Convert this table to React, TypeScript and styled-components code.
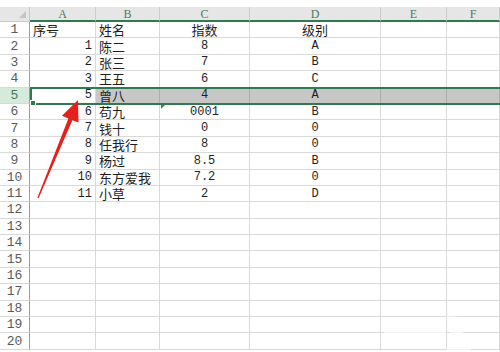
import React from "react";
import styled, { createGlobalStyle } from "styled-components";

const GlobalStyle = createGlobalStyle`
  html, body {
    margin: 0;
    padding: 0;
    background: #fff;
    overflow: hidden;
  }
`;

const COLS = "30px 66px 64px 90px 131px 66px 1fr";
const GREEN = "#2f7a4f";
const GRID = "#d9d9d9";

const Sheet = styled.div`
  position: relative;
  width: 500px;
  height: 352px;
  padding-top: 7px;
  box-sizing: border-box;
  overflow: hidden;
  background: #fff;
`;

const Row = styled.div<{ $header?: boolean; $selected?: boolean }>`
  position: relative;
  display: grid;
  grid-template-columns: ${COLS};
  height: ${(p) => (p.$header ? "15px" : "16.4px")};

  ${(p) =>
    p.$selected &&
    `
    &::after {
      content: "";
      position: absolute;
      left: 30px;
      right: -4px;
      top: -1px;
      bottom: -1px;
      border: 2px solid ${GREEN};
      pointer-events: none;
      z-index: 2;
    }
  `}
`;

const Corner = styled.div`
  position: relative;
  box-sizing: border-box;
  background: #e6e6e6;
  border-right: 1px solid #c9c9c9;
  border-bottom: 1px solid #c9c9c9;

  &::after {
    content: "";
    position: absolute;
    right: 3px;
    bottom: 3px;
    width: 0;
    height: 0;
    border-left: 7px solid transparent;
    border-bottom: 7px solid #c4c4c4;
  }
`;

const ColHead = styled.div`
  box-sizing: border-box;
  display: flex;
  align-items: center;
  justify-content: center;
  background: #e6e6e6;
  border-right: 1px solid #cbcbcb;
  border-bottom: 2px solid ${GREEN};
  font-family: "Liberation Serif", serif;
  font-size: 12px;
  color: #4b7c5e;
  line-height: 1;
`;

const RowNum = styled.div<{ $active?: boolean }>`
  box-sizing: border-box;
  display: flex;
  align-items: center;
  justify-content: center;
  background: ${(p) => (p.$active ? "#d6eadc" : "#fff")};
  border-right: 1px solid #9c9c9c;
  border-bottom: 1px solid ${GRID};
  font-family: "Liberation Mono", monospace;
  font-size: 13px;
  color: ${(p) => (p.$active ? "#3f7b58" : "#5a5a5a")};
  line-height: 1;
`;

type Align = "left" | "right" | "center";

const Cell = styled.div<{
  $align?: Align;
  $cjk?: boolean;
  $shade?: boolean;
  $flag?: boolean;
}>`
  position: relative;
  box-sizing: border-box;
  display: flex;
  align-items: center;
  justify-content: ${(p) =>
    p.$align === "right" ? "flex-end" : p.$align === "center" ? "center" : "flex-start"};
  padding: 0 3px;
  white-space: nowrap;
  background: ${(p) => (p.$shade ? "#c7c7c7" : "transparent")};
  border-right: 1px solid ${(p) => (p.$shade ? "#adadad" : GRID)};
  border-bottom: 1px solid ${GRID};
  font-family: ${(p) =>
    p.$cjk
      ? '"Noto Sans CJK SC", sans-serif'
      : '"Liberation Mono", "Noto Sans CJK SC", monospace'};
  font-size: ${(p) => (p.$cjk ? "13px" : "12px")};
  color: #1e1e1e;
  line-height: 1;

  ${(p) =>
    p.$flag &&
    `
    &::before {
      content: "";
      position: absolute;
      left: 1px;
      top: 0;
      width: 0;
      height: 0;
      border-top: 5px solid #2f8a4f;
      border-right: 5px solid transparent;
    }
  `}
`;

const FillHandle = styled.span`
  position: absolute;
  left: 30px;
  bottom: -2px;
  width: 4px;
  height: 4px;
  background: ${GREEN};
  border: 1px solid #fff;
  z-index: 3;
`;

const Overlay = styled.svg`
  position: absolute;
  left: 0;
  top: 0;
  pointer-events: none;
  z-index: 5;
`;

type Value = { text: string; align: Align; cjk?: boolean };

const data: Value[][] = [
  [
    { text: "序号", align: "left", cjk: true },
    { text: "姓名", align: "left", cjk: true },
    { text: "指数", align: "center", cjk: true },
    { text: "级别", align: "center", cjk: true },
  ],
  ...[
    ["1", "陈二", "8", "A"],
    ["2", "张三", "7", "B"],
    ["3", "王五", "6", "C"],
    ["5", "曾八", "4", "A"],
    ["6", "苟九", "0001", "B"],
    ["7", "钱十", "0", "0"],
    ["8", "任我行", "8", "0"],
    ["9", "杨过", "8.5", "B"],
    ["10", "东方爱我", "7.2", "0"],
    ["11", "小草", "2", "D"],
  ].map(
    ([a, b, c, d]): Value[] => [
      { text: a, align: "right" },
      { text: b, align: "left", cjk: true },
      { text: c, align: "center" },
      { text: d, align: "center" },
    ]
  ),
];

const letters = ["A", "B", "C", "D", "E", "F"];
const SELECTED = 5;
const TOTAL_ROWS = 20;

const App: React.FC = () => {
  return (
    <>
      <GlobalStyle />
      <Sheet>
        <Row $header>
          <Corner />
          {letters.map((l) => (
            <ColHead key={l}>{l}</ColHead>
          ))}
        </Row>
        {Array.from({ length: TOTAL_ROWS }, (_, i) => {
          const n = i + 1;
          const values = data[i] || [];
          const selected = n === SELECTED;
          return (
            <Row key={n} $selected={selected}>
              <RowNum $active={selected}>{n}</RowNum>
              {letters.map((l, c) => {
                const v = values[c];
                return (
                  <Cell
                    key={l}
                    $align={v ? v.align : "left"}
                    $cjk={v?.cjk}
                    $shade={selected && c > 0}
                    $flag={n === 6 && c === 2}
                  >
                    {v ? v.text : ""}
                  </Cell>
                );
              })}
              {selected && <FillHandle />}
            </Row>
          );
        })}
        <Overlay width="500" height="352" viewBox="0 0 500 352">
          <polygon
            points="78,100 78.5,122.5 72.4,120.2 38.6,198.3 37.4,197.7 68.4,118.6 62,115.8"
            fill="#e5201d"
          />
          <g fill="#fff" opacity="0.7">
            <rect x="384" y="320" width="62" height="14" />
            <polygon points="446,316 462,317 462,330 472,352 446,352 450,334" />
          </g>
        </Overlay>
      </Sheet>
    </>
  );
};

export default App;
